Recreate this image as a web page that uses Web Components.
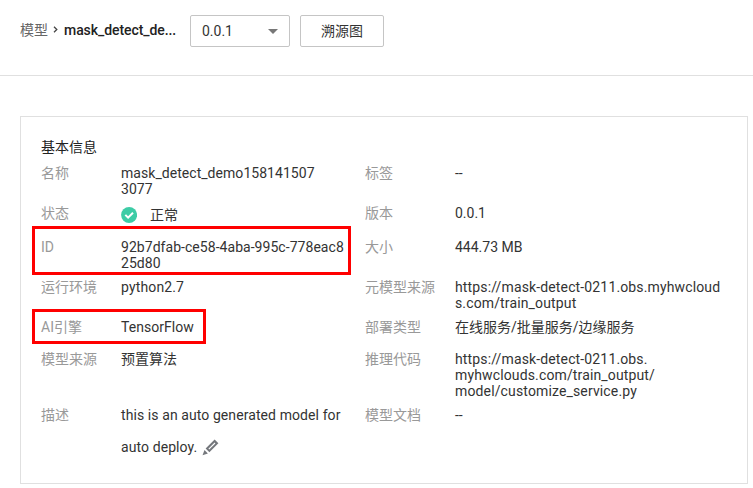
<!DOCTYPE html>
<html lang="zh-CN">
<head>
<meta charset="utf-8">
<title>模型</title>
<style>
html,body{margin:0;background:#fff}
body{width:753px;height:488px;overflow:hidden;font:14px/16px Roboto,"Noto Sans CJK SC",sans-serif;color:#333}
</style>
</head>
<body>
<model-page></model-page>
<script>
const define = (name, html) => customElements.define(name, class extends HTMLElement {
  constructor() {
    super();
    this.attachShadow({mode: 'open'}).innerHTML = html;
  }
});

define('crumb-trail', `
<style>
:host{display:flex;align-items:center;width:156px;height:16px;white-space:nowrap}
.parent{color:#666;width:28px}
svg{width:5px;height:7px;margin:0 6px 2px 5px;flex:none}
.current{font-weight:500;color:#222;letter-spacing:-.07px}
</style>
<span class="parent"><slot name="parent"></slot></span>
<svg viewBox="0 0 5 7"><path d="M1 .8 3.8 3.5 1 6.2" fill="none" stroke="#444" stroke-width="1.3"/></svg>
<span class="current"><slot></slot></span>`);

define('version-select', `
<style>
:host{display:flex;align-items:center;justify-content:space-between;box-sizing:border-box;width:100px;height:32px;padding:0 11px;border:1px solid #c5c5c5;border-radius:2px}
svg{width:10px;height:5px}
</style>
<span><slot></slot></span>
<svg viewBox="0 0 10 5"><path d="M0 0h10L5 5z" fill="#777"/></svg>`);

define('action-button', `
<style>
:host{display:flex;align-items:center;justify-content:center;box-sizing:border-box;width:84px;height:32px;border:1px solid #c5c5c5;border-radius:2px}
</style><slot></slot>`);

define('page-header', `
<style>
:host{display:flex;box-sizing:border-box;height:76px;padding:15px 0 0 20px;border-bottom:1px solid #e0e0e0}
crumb-trail{margin:7px 14px 0 0}
version-select{margin-right:10px}
</style>
<crumb-trail><span slot="parent">模型</span>mask_detect_de...</crumb-trail>
<version-select>0.0.1</version-select>
<action-button>溯源图</action-button>`);

define('info-row', `
<style>
:host{display:grid;grid-template-columns:80px 244px 90px 1fr;box-sizing:border-box;height:var(--h);position:relative;white-space:nowrap}
.label{color:#999}
.mark{position:absolute;left:-9px;box-sizing:border-box;border:3px solid #f00;display:none}
:host([mark]) .mark{display:block;width:var(--mw);height:var(--mh);top:var(--mt)}
</style>
<span class="label"><slot name="a"></slot></span>
<div><slot name="av"></slot></div>
<span class="label"><slot name="b"></slot></span>
<div><slot name="bv"></slot></div>
<i class="mark"></i>`);

define('status-ok', `
<style>
:host{display:flex;align-items:center;gap:13px;height:20px}
svg{width:16px;height:16px}
</style>
<svg viewBox="0 0 16 16"><circle cx="8.1" cy="8" r="8" fill="#3dcca6"/><path d="m4.3 7.9 2.8 2.8 4.9-4.9" fill="none" stroke="#fff" stroke-width="2"/></svg>
<span><slot></slot></span>`);

define('edit-icon', `
<style>
:host{display:inline-block;width:17px;height:17px;margin-left:1px;vertical-align:-4px;line-height:0}
svg{width:17px;height:17px}
</style>
<svg viewBox="0 0 17 17"><path d="M12.6.5 16.4 4.3 7.4 13.3 3.6 9.5z" fill="#74777c"/><path d="m6.4 9.8 6.2-6.2.8.8-6.2 6.2z" fill="#fff"/><path d="m2.5 11 3.4 3.4L.5 16.2z" fill="#74777c"/></svg>`);

define('info-panel', `
<style>
:host{display:block;box-sizing:border-box;width:728px;height:368px;margin:40px 0 0 20px;padding:22px 20px 0;border:1px solid #e0e0e0}
.title{height:26px;color:#222}
.desc{line-height:32px;margin-top:-8px;letter-spacing:.085px}
.id{letter-spacing:.045px}
.url{letter-spacing:.14px}
</style>
<div class="title">基本信息</div>
<info-row style="--h:40px"><span slot="a">名称</span><span slot="av" class="id">mask_detect_demo158141507<br>3077</span><span slot="b">标签</span><span slot="bv">--</span></info-row>
<info-row style="--h:34px"><span slot="a">状态</span><status-ok slot="av">正常</status-ok><span slot="b">版本</span><span slot="bv">0.0.1</span></info-row>
<info-row mark style="--h:40px;--mt:-13px;--mw:319px;--mh:49px"><span slot="a">ID</span><span slot="av" class="id">92b7dfab-ce58-4aba-995c-778eac8<br>25d80</span><span slot="b">大小</span><span slot="bv">444.73 MB</span></info-row>
<info-row style="--h:40px"><span slot="a">运行环境</span><span slot="av" class="url">python2.7</span><span slot="b">元模型来源</span><span slot="bv" class="url">https://mask-detect-0211.obs.myhwcloud<br>s.com/train_output</span></info-row>
<info-row mark style="--h:32px;--mt:-10px;--mw:174px;--mh:35px"><span slot="a">AI引擎</span><span slot="av" class="id">TensorFlow</span><span slot="b">部署类型</span><span slot="bv">在线服务/批量服务/边缘服务</span></info-row>
<info-row style="--h:56px"><span slot="a">模型来源</span><span slot="av">预置算法</span><span slot="b">推理代码</span><span slot="bv" class="url">https://mask-detect-0211.obs.<br>myhwclouds.com/train_output/<br>model/customize_service.py</span></info-row>
<info-row style="--h:56px"><span slot="a">描述</span><div slot="av" class="desc">this is an auto generated model for<br>auto deploy. <edit-icon></edit-icon></div><span slot="b">模型文档</span><span slot="bv">--</span></info-row>`);

define('model-page', `
<style>:host{display:block}</style>
<page-header></page-header>
<info-panel></info-panel>`);
</script>
</body>
</html>
